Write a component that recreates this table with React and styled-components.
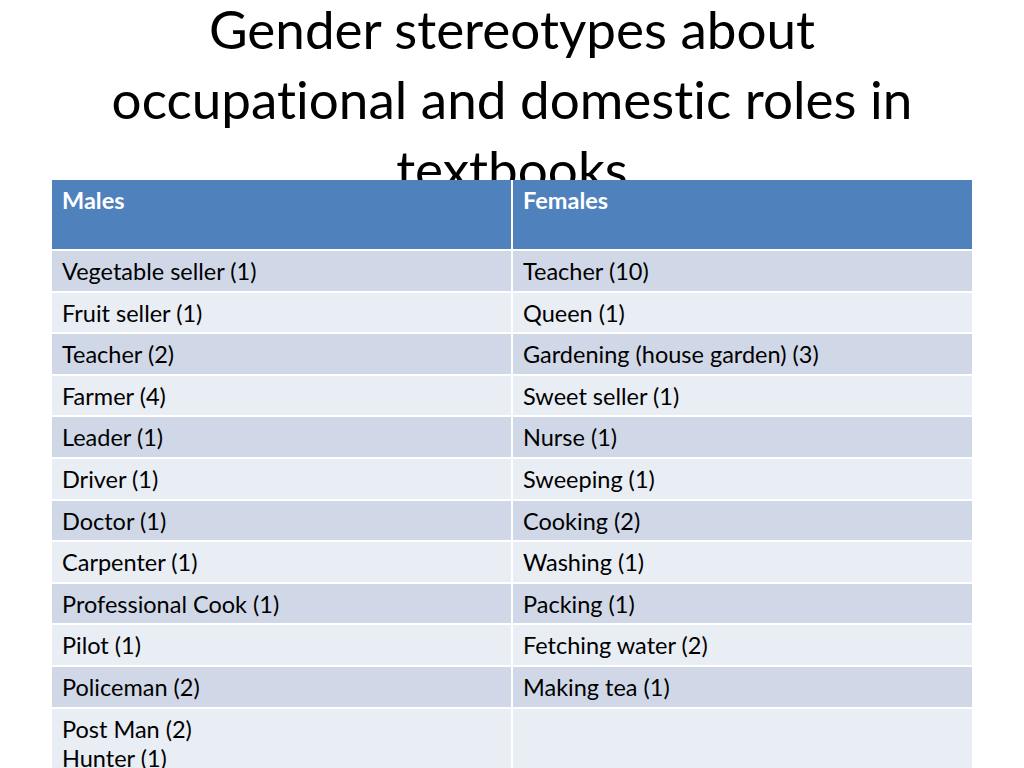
import React from "react";
import styled, { createGlobalStyle } from "styled-components";

const Global = createGlobalStyle`
  html, body {
    margin: 0;
    padding: 0;
    background: #ffffff;
  }
  body {
    width: 1024px;
    height: 768px;
    overflow: hidden;
    font-family: Lato, "Open Sans", sans-serif;
    font-variant-ligatures: none;
  }
`;

const Slide = styled.div`
  width: 1024px;
  height: 768px;
  display: flex;
  flex-direction: column;
  align-items: center;
  overflow: hidden;
`;

const Title = styled.h1`
  margin: 0;
  width: 900px;
  height: 180px;
  padding-top: 0;
  margin-top: -6px;
  margin-bottom: 6px;
  box-sizing: border-box;
  font-family: Lato, sans-serif;
  font-weight: 400;
  font-size: 53px;
  line-height: 70px;
  color: #000;
  text-align: center;
  position: relative;
  z-index: 0;
`;

const Table = styled.div`
  width: 920px;
  display: grid;
  grid-template-columns: 1fr 1fr;
  grid-template-rows: 69px repeat(11, 39.6px) auto;
  gap: 2px 2px;
  background: #ffffff;
  position: relative;
  z-index: 1;
`;

const HeadCell = styled.div`
  background: #4f81bd;
  color: #ffffff;
  font-weight: 700;
  font-size: 23.5px;
  line-height: 29px;
  padding: 6px 10px 0;
`;

const Cell = styled.div`
  background: ${(p) => (p.band ? "#d0d8e8" : "#e9edf4")};
  color: #000;
  font-size: 23.5px;
  line-height: 29px;
  padding: 6px 10px 0;
  min-height: ${(p) => (p.tall ? "70px" : "0")};
`;

const rows = [
  ["Vegetable seller (1)", "Teacher (10)"],
  ["Fruit seller (1)", "Queen (1)"],
  ["Teacher (2)", "Gardening (house garden) (3)"],
  ["Farmer (4)", "Sweet seller (1)"],
  ["Leader (1)", "Nurse (1)"],
  ["Driver (1)", "Sweeping (1)"],
  ["Doctor (1)", "Cooking (2)"],
  ["Carpenter (1)", "Washing (1)"],
  ["Professional Cook (1)", "Packing (1)"],
  ["Pilot (1)", "Fetching water (2)"],
  ["Policeman (2)", "Making tea (1)"],
  [["Post Man (2)", "Hunter (1)"], ""],
];

export default function App() {
  return (
    <Slide>
      <Global />
      <Title>
        Gender stereotypes about occupational and domestic roles in textbooks
      </Title>
      <Table>
        <HeadCell>Males</HeadCell>
        <HeadCell>Females</HeadCell>
        {rows.map((r, i) =>
          r.map((c, j) => (
            <Cell key={i + "-" + j} band={i % 2 === 0} tall={i === 11}>
              {Array.isArray(c)
                ? c.map((line) => <div key={line}>{line}</div>)
                : c}
            </Cell>
          ))
        )}
      </Table>
    </Slide>
  );
}
